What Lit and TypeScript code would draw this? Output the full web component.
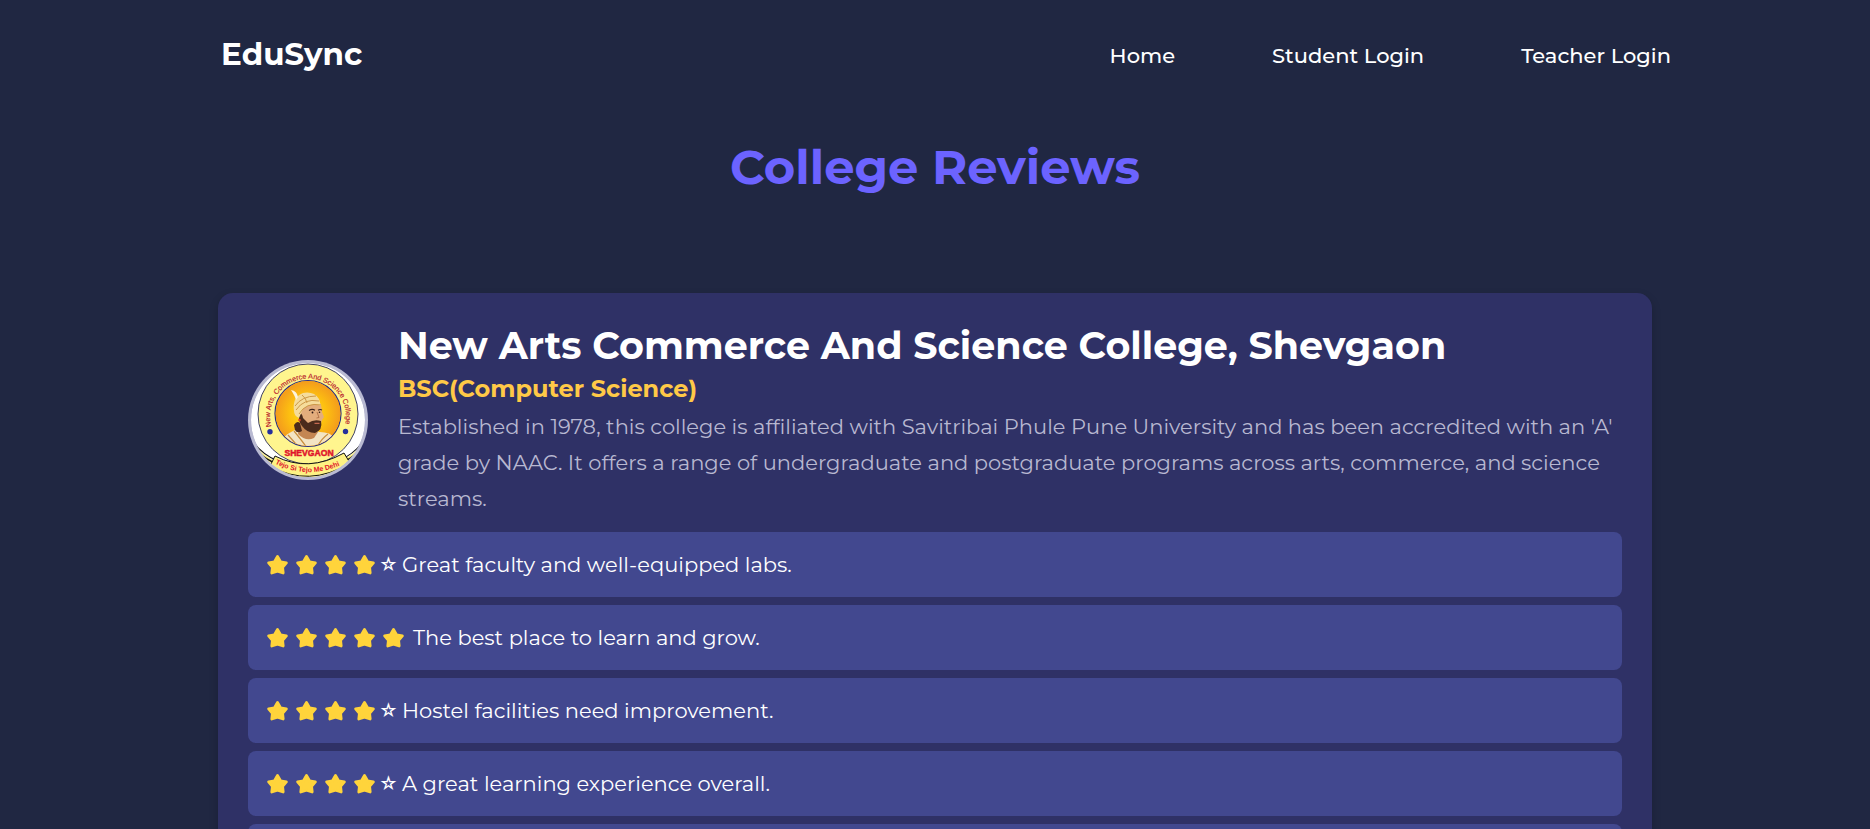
import { LitElement, html, css, svg } from 'lit';
import { customElement, property } from 'lit/decorators.js';

interface Review {
  rating: number;
  text: string;
}

const REVIEWS: Review[] = [
  { rating: 4, text: 'Great faculty and well-equipped labs.' },
  { rating: 5, text: 'The best place to learn and grow.' },
  { rating: 4, text: 'Hostel facilities need improvement.' },
  { rating: 4, text: 'A great learning experience overall.' },
  { rating: 5, text: '' },
];

const star = html`<svg class="star" viewBox="0 0 29 24" aria-hidden="true">
  <path
    d="M14.5 3.4 L17.5 8.8 L23.4 9.9 L19.6 14.4 L20.2 20 L14.5 18.1 L8.8 20 L9.4 14.4 L5.6 9.9 L11.5 8.8 Z"
    fill="#ffd43b" stroke="#ffd43b" stroke-width="2.8" stroke-linejoin="round" />
</svg>`;

@customElement('review-item')
export class ReviewItem extends LitElement {
  static styles = css`
    :host {
      display: flex;
      align-items: center;
      padding: 15px;
      border-radius: 8px;
      background: #42488f;
      color: #fff;
      font-size: 21px;
      line-height: 35px;
      min-height: 35px;
    }
    .stars {
      display: flex;
      align-items: center;
      margin-right: 5px;
    }
    .star {
      width: 29px;
      height: 24px;
    }
    .empty {
      width: 18px;
      text-align: center;
      font-family: Inter, 'DejaVu Sans', sans-serif;
      font-size: 18px;
    }
  `;

  @property({ type: Number }) rating = 0;
  @property() text = '';

  render() {
    return html`
      <span class="stars">
        ${Array.from({ length: this.rating }, () => star)}
        ${Array.from({ length: 5 - this.rating }, () => html`<span class="empty">☆</span>`)}
      </span>
      <span>${this.text}</span>
    `;
  }
}

@customElement('college-seal')
export class CollegeSeal extends LitElement {
  static styles = css`
    :host {
      display: block;
      width: 120px;
      height: 120px;
      flex: none;
    }
    svg {
      display: block;
      width: 100%;
      height: 100%;
    }
    text {
      font-family: 'Liberation Sans', sans-serif;
    }
    .ring {
      font-size: 7.2px;
      fill: #b8202c;
      stroke: #b8202c;
      stroke-width: 0.15px;
    }
    .town {
      font-size: 8.6px;
      font-weight: bold;
      fill: #e0142c;
      stroke: #e0142c;
      stroke-width: 0.5px;
    }
    .motto {
      font-size: 7px;
      font-weight: bold;
      fill: #e0142c;
    }
  `;

  private portrait() {
    return svg`
      <g clip-path="url(#face)">
        <circle cx="60" cy="53.5" r="33" fill="url(#glow)" />
        <path d="M32 90 L35 79 Q38 74 45 71 L52 67 L72 72 Q82 72 87 78 L90 92 Z" fill="#f3e4c4" />
        <path d="M40 75 Q48 84 53 90 M46 71 Q55 82 59 88 M80 74 Q72 80 69 88" stroke="#c98d3c" stroke-width="1.2" fill="none" />
        <path d="M52 62 L50 74 Q58 82 66 78 L70 72 Z" fill="#c48652" />
        <path d="M53 46 Q63 40 73 44 L74 52 L76 57 L74 60 Q72 70 65 70 Q55 67 53 58 Z" fill="#e3ad7c" />
        <path d="M51 54 Q54 52 55 58 L60 63 Q66 59 73 61 Q75 70 67 73 Q59 73 54 66 Q50 61 51 54 Z" fill="#4a2b1c" />
        <path d="M66.5 63.3 H71.5" stroke="#c4694f" stroke-width="1.2" />
        <path d="M61 50.5 Q64 48.5 67 50.2 M70 50.2 Q72 48.8 74 50" stroke="#3b211a" stroke-width="1.1" fill="none" />
        <circle cx="64.5" cy="52.5" r="0.9" fill="#2a1511" />
        <circle cx="71.5" cy="52.3" r="0.8" fill="#2a1511" />
        <path d="M69 52 L71 57.5 L68.5 58" stroke="#a9673f" stroke-width="0.8" fill="none" />
        <path d="M46 65 Q49 60 52 63 L54 71 Q49 74 47 70 Z" fill="#4a2b1c" />
        <path d="M46 51 Q44 37 55 33 Q66 31 71 39 L73 46 Q63 42 55 49 L51 58 Q46 56 46 51 Z" fill="#f5dc9b" />
        <path d="M48 50 Q56 38 71 41 M47 46 Q54 36 68 36 M51 54 Q58 42 73 45 M54 35 Q58 38 59 43" stroke="#cc9847" stroke-width="1" fill="none" />
        <path d="M50 37 Q49 31 43 30 Q47 36 48 40 Z" fill="#fdf4df" />
        <circle cx="51.5" cy="60" r="1.3" fill="#d8442c" />
      </g>
    `;
  }

  render() {
    return html`
      <svg viewBox="0 0 120 120" role="img" aria-label="College seal">
        <defs>
          <radialGradient id="glow">
            <stop offset="0" stop-color="#ffdf1a" />
            <stop offset="0.55" stop-color="#fdc010" />
            <stop offset="1" stop-color="#f39a1d" />
          </radialGradient>
          <clipPath id="face"><circle cx="60" cy="53.5" r="32.5" /></clipPath>
          <clipPath id="disc"><circle cx="60" cy="60" r="57" /></clipPath>
          <path id="ringPath" d="M23.3 66.5 A38 38 0 1 1 96.7 66.5" />
          <path id="mottoPath" d="M27 103.5 Q61 121 97 103" />
        </defs>
        <circle cx="60" cy="60" r="60" fill="#b9bad2" />
        <g clip-path="url(#disc)">
          <circle cx="60" cy="60" r="57" fill="#fff" />
          <path d="M4 82 Q24 108 60 108 Q96 108 116 82 V120 H4 Z" fill="#fef283" />
          <path d="M6 83 Q24 106 60 106 Q96 106 114 83" fill="none" stroke="#111" stroke-width="1.1" />
          <path d="M8 90 Q26 109 60 109 Q94 109 112 90" fill="none" stroke="#111" stroke-width="1.5" />
          <circle cx="60" cy="54" r="50" fill="#fff58e" stroke="#2a2c5c" stroke-width="0.9" />
          <path d="M27 96 Q60 113 96 93 L102 103 Q61 128 22 106 Z" fill="#fef283" stroke="#111" stroke-width="1" />
        </g>
        <circle cx="60" cy="53.5" r="33" fill="#fbb515" stroke="#2a2f86" stroke-width="1.2" />
        ${this.portrait()}
        <circle cx="22" cy="71.7" r="2.7" fill="#252f9c" />
        <circle cx="97.5" cy="71.5" r="2.7" fill="#252f9c" />
        <text class="ring"><textPath href="#ringPath">New Arts, Commerce And Science College</textPath></text>
        <text class="town" x="61" y="95.5" text-anchor="middle">SHEVGAON</text>
        <text class="motto"><textPath href="#mottoPath">Tejo Si Tejo Me Dehi</textPath></text>
      </svg>
    `;
  }
}

@customElement('app-root')
export class AppRoot extends LitElement {
  static styles = css`
    :host {
      display: block;
      height: 100vh;
      overflow-y: auto;
      scrollbar-width: none;
      background: #202742;
      color: #fff;
      font-family: Montserrat, Inter, 'Open Sans', sans-serif;
    }
    header {
      display: flex;
      align-items: center;
      justify-content: space-between;
      height: 110px;
      padding: 0 199px 0 221px;
    }
    .brand {
      padding-bottom: 2px;
      font-size: 31px;
      font-weight: 700;
      line-height: 40px;
      color: #fff;
      text-decoration: none;
    }
    nav {
      display: flex;
      gap: 97px;
      padding-top: 2px;
    }
    nav a {
      font-size: 21px;
      font-weight: 500;
      line-height: 40px;
      color: #fff;
      text-decoration: none;
    }
    h1 {
      margin: 0;
      padding: 28px 0 97px;
      text-align: center;
      font-size: 48px;
      font-weight: 700;
      line-height: 58px;
      color: #6c63ff;
    }
    .card {
      display: flex;
      flex-direction: column;
      gap: 15px;
      box-sizing: border-box;
      max-width: 1434px;
      margin: 0 auto 40px;
      padding: 30px;
      border-radius: 15px;
      background: #2f3166;
      box-shadow: 0 4px 10px rgba(0, 0, 0, 0.2);
    }
    .summary {
      display: flex;
      align-items: center;
      gap: 30px;
    }
    h2 {
      margin: 0;
      font-size: 38px;
      font-weight: 700;
      line-height: 45px;
    }
    h3 {
      margin: 0;
      font-size: 24px;
      font-weight: 700;
      line-height: 41px;
      color: #ffc947;
    }
    .about {
      margin: 0;
      font-size: 21px;
      line-height: 36px;
      color: #b8b8d1;
    }
    .reviews {
      display: flex;
      flex-direction: column;
      gap: 8px;
    }
  `;

  render() {
    return html`
      <header>
        <a class="brand" href="#">EduSync</a>
        <nav>
          <a href="#home">Home</a>
          <a href="#student">Student Login</a>
          <a href="#teacher">Teacher Login</a>
        </nav>
      </header>
      <main>
        <h1>College Reviews</h1>
        <section class="card">
          <div class="summary">
            <college-seal></college-seal>
            <div>
              <h2>New Arts Commerce And Science College, Shevgaon</h2>
              <h3>BSC(Computer Science)</h3>
              <p class="about">
                Established in 1978, this college is affiliated with Savitribai Phule Pune University
                and has been accredited with an 'A' grade by NAAC. It offers a range of undergraduate
                and postgraduate programs across arts, commerce, and science streams.
              </p>
            </div>
          </div>
          <div class="reviews">
            ${REVIEWS.map((r) => html`<review-item .rating=${r.rating} .text=${r.text}></review-item>`)}
          </div>
        </section>
      </main>
    `;
  }
}
